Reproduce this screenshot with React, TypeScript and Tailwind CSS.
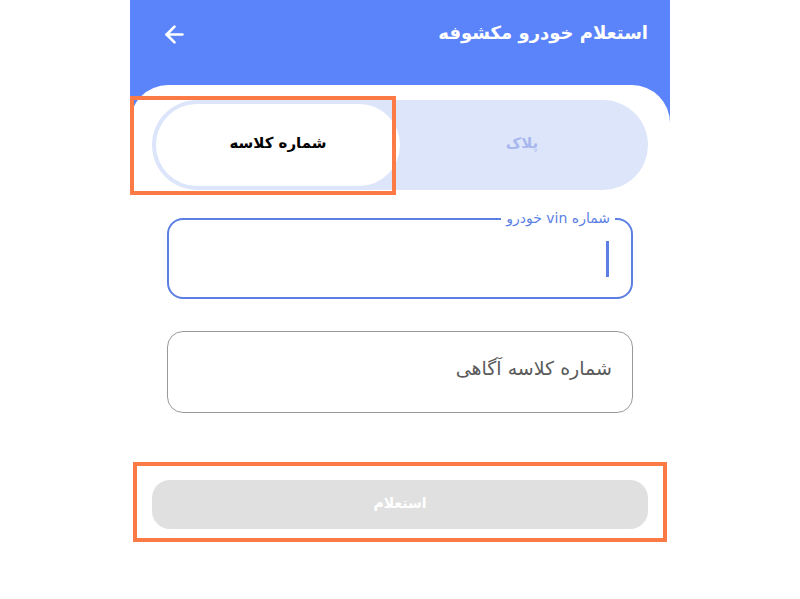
import { ArrowLeft } from "lucide-react";

const font = { fontFamily: '"DejaVu Sans", "Noto Sans", sans-serif' };

export default function App() {
  return (
    <div className="min-h-[599px] bg-white" style={font}>
      <div dir="rtl" className="mx-auto w-[540px]">
        {/* header */}
        <div className="flex h-[130px] items-start justify-between bg-[#5b84fb] pl-[31px] pr-[22px] pt-[20px]">
          <h1 className="text-[18px] font-bold leading-[26px] text-white">استعلام خودرو مکشوفه</h1>
          <ArrowLeft className="mt-[1px] h-[27px] w-[27px] text-white" strokeWidth={2.4} />
        </div>

        {/* body */}
        <div className="relative -mt-[45px] rounded-t-[38px] bg-white pb-[60px] pt-[15px]">
          <div className="px-[22px]">
            <div className="flex h-[90px] rounded-full bg-[#dde5fb] p-[4px]">
              <button className="flex-1 pb-[3px] text-[15px] font-bold text-[#a8b8ee]">پلاک</button>
              <button className="flex-1 rounded-full bg-white pb-[3px] text-[15px] font-bold text-black">شماره کلاسه</button>
            </div>
          </div>

          <div className="mt-[28px] flex flex-col gap-[32px] px-[37px]">
            <div className="relative h-[81px] rounded-[16px] border-2 border-[#5b7fe3]">
              <span className="absolute -top-[11px] right-[16px] bg-white px-[5px] text-[14px] leading-[18px] text-[#5b7fe3]">
                شماره vin خودرو
              </span>
              <span className="absolute right-[22px] top-[21px] h-[36px] w-[3px] bg-[#5b7fe3]" />
            </div>
            <div className="flex h-[82px] items-center rounded-[16px] border border-[#9a9a9a] px-[20px] pb-[8px]">
              <span className="text-[19px] text-[#5a5a5a]">شماره کلاسه آگاهی</span>
            </div>
          </div>

          <div className="mt-[67px] px-[22px]">
            <button className="h-[49px] w-full rounded-[18px] bg-[#e0e0e0] pb-[2px] text-[14px] font-bold text-white">استعلام</button>
          </div>

          {/* annotation frames */}
          <div className="absolute left-0 top-[11px] h-[99px] w-[266px] border-[4px] border-[#fb7a45]" />
          <div className="absolute left-[3px] top-[377px] h-[80px] w-[534px] border-[4px] border-[#fb7a45]" />
        </div>
      </div>
    </div>
  );
}
